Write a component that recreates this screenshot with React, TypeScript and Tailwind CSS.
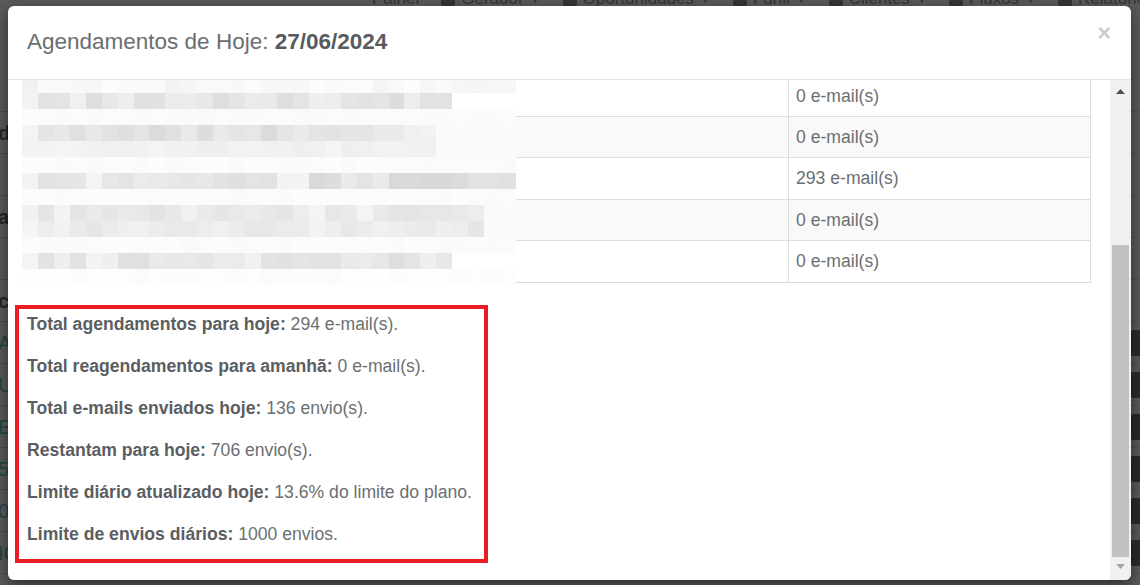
import React from 'react';

const rnd = (n: number) => {
  const x = Math.sin(n * 12.9898 + 78.233) * 43758.5453;
  return x - Math.floor(x);
};

type Seg = [number, number, number];
const mosaicSpec: Seg[][] = [
  [[31, 0xf4, 0xfb]],
  [[27, 0xdb, 0xee], [31, 0xff, 0xff]],
  [[31, 0xf9, 0xfa]],
  [[24, 0xd9, 0xea], [26, 0xef, 0xf2], [31, 0xf9, 0xf9]],
  [[26, 0xee, 0xf4], [31, 0xf9, 0xf9]],
  [[31, 0xf9, 0xfb]],
  [[31, 0xd6, 0xeb]],
  [[31, 0xf9, 0xfb]],
  [[29, 0xe2, 0xef], [31, 0xf9, 0xf9]],
  [[29, 0xe4, 0xf0], [31, 0xf9, 0xf9]],
  [[31, 0xf9, 0xfb]],
  [[27, 0xdc, 0xee], [31, 0xff, 0xff]],
  [[31, 0xfa, 0xfd]],
];

function Mosaic() {
  const cells: React.ReactNode[] = [];
  mosaicSpec.forEach((segs, r) => {
    for (let c = 0; c < 31; c++) {
      const seg = segs.find((s) => c < s[0]) || segs[segs.length - 1];
      let v = seg[1] + Math.round(rnd(r * 31 + c) * (seg[2] - seg[1]));
      if (seg[2] - seg[1] > 6 && (c === 0 || rnd(r * 97 + c * 13) < 0.07)) v = 0xef + Math.round(rnd(c + r * 7) * 5);
      const g = Math.min(255, v);
      const g2 = Math.min(255, g + 1);
      cells.push(<div key={`${r}-${c}`} style={{ backgroundColor: `rgb(${g},${g2},${g2})` }} />);
    }
  });
  return (
    <div className="absolute -left-[1px] top-[1px] grid h-[208px] w-[494px] grid-cols-[repeat(31,1fr)] grid-rows-[repeat(13,16px)]">
      {cells}
    </div>
  );
}

const tableRows = [
  { v: '0 e-mail(s)', h: 'h-[41px]', bg: 'bg-white' },
  { v: '0 e-mail(s)', h: 'h-[41px]', bg: 'bg-[#f9f9f9]' },
  { v: '293 e-mail(s)', h: 'h-[42px]', bg: 'bg-white' },
  { v: '0 e-mail(s)', h: 'h-[41px]', bg: 'bg-[#f9f9f9]' },
  { v: '0 e-mail(s)', h: 'h-[42px]', bg: 'bg-white' },
];

const stats: [string, string][] = [
  ['Total agendamentos para hoje:', ' 294 e-mail(s).'],
  ['Total reagendamentos para amanhã:', ' 0 e-mail(s).'],
  ['Total e-mails enviados hoje:', ' 136 envio(s).'],
  ['Restantam para hoje:', ' 706 envio(s).'],
  ['Limite diário atualizado hoje:', ' 13.6% do limite do plano.'],
  ['Limite de envios diários:', ' 1000 envios.'],
];

const navItems = ['Painel', 'Gerador', 'Oportunidades', 'Funil', 'Clientes', 'Fluxos', 'Relatórios'];

const bgRows = [
  { l: '', b: false },
  { l: 'd', b: false },
  { l: '', b: false },
  { l: 'ai', b: false },
  { l: '', b: false },
  { l: 'c', b: false },
  { l: 'A', b: true },
  { l: 'U', b: true },
  { l: 'E', b: true },
  { l: '5', b: true },
  { l: '0', b: true },
  { l: 'IC', b: true },
];

export default function App() {
  return (
    <div className="relative h-[585px] w-[1140px] overflow-hidden bg-[#5a5a5a] font-['Liberation_Sans',Arial,sans-serif]">
      {/* background page (dimmed) */}
      <div className="flex h-[18px] -mt-[10px] items-center gap-[22px] pl-[372px] text-[17px] text-[#353535] whitespace-nowrap">
        {navItems.map((n, i) => (
          <div key={n} className="flex items-center gap-[6px]">
            {i > 0 && <span className="inline-block h-[14px] w-[14px] rounded-[2px] bg-[#353535]" />}
            <span>{n}</span>
            {i > 0 && i < 6 && <span className="text-[11px]">▼</span>}
          </div>
        ))}
      </div>
      <div className="mt-[62px] flex flex-col">
        {bgRows.map((r, i) => (
          <div key={i} className="flex h-[42px] items-center justify-between border-b border-[#4e4e4e]">
            <span className={`-ml-[2px] text-[20px] ${r.b ? 'text-[#1f4646]' : 'font-bold text-[#262626]'}`}>{r.l}</span>
            {r.b && <span className="mr-[-12px] inline-block h-[26px] w-[22px] rounded-[4px] bg-[#2a2a2a]" />}
          </div>
        ))}
      </div>

      {/* modal */}
      <div className="absolute left-[8px] top-[6px] flex h-[574px] w-[1123px] flex-col overflow-hidden rounded-[6px] bg-white shadow-[0_5px_15px_rgba(0,0,0,0.5)]">
        <div className="flex h-[74px] shrink-0 items-start justify-between border-b border-[#e5e5e5] pl-[19px] pr-[20px]">
          <h4 className="mt-[22px] text-[22.5px] leading-[28px] text-[#6a6e71]">
            Agendamentos de Hoje: <b className="text-[#575b5f]">27/06/2024</b>
          </h4>
          <span className="mt-[16px] text-[23px] font-bold leading-[23px] text-[#cccccc]">×</span>
        </div>
        <div className="flex min-h-0 flex-1">
          <div className="min-w-0 flex-1 overflow-hidden pl-[14px] pr-[20px]">
            <div className="relative -mt-[5px] w-[1069px] border-x border-t border-[#dddddd]">
              {tableRows.map((r, i) => (
                <div key={i} className={`flex ${r.h} border-b border-[#dddddd] ${r.bg}`}>
                  <div className="w-[766px] shrink-0 border-r border-[#dddddd]" />
                  <div className="flex flex-1 items-center pl-[7px] text-[17.6px] text-[#6b6f72]">{r.v}</div>
                </div>
              ))}
              <Mosaic />
            </div>
            <div className="mt-[22px] -ml-[7px] flex w-[473px] flex-col gap-[17px] border-[4px] border-[#ec1c24] pb-[12px] pl-[8px] pt-[3px] text-[17.6px] leading-[25px] text-[#6b6f72]">
              {stats.map(([k, v]) => (
                <p key={k} className="whitespace-nowrap">
                  <b className="text-[#5a5e62]">{k}</b>
                  {v}
                </p>
              ))}
            </div>
          </div>
          <div className="flex w-[21px] shrink-0 flex-col bg-[#f1f1f1]">
            <svg width="21" height="17" viewBox="0 0 21 17" className="shrink-0">
              <polygon points="6,14 15,14 10.5,9" fill="#505050" />
            </svg>
            <div className="h-[148px] shrink-0" />
            <div className="mx-[2px] h-[312px] shrink-0 bg-[#c1c1c1]" />
            <div className="flex-1" />
            <svg width="21" height="20" viewBox="0 0 21 20" className="shrink-0">
              <polygon points="6,4 15,4 10.5,9" fill="#a3a3a3" />
            </svg>
          </div>
        </div>
      </div>
    </div>
  );
}
